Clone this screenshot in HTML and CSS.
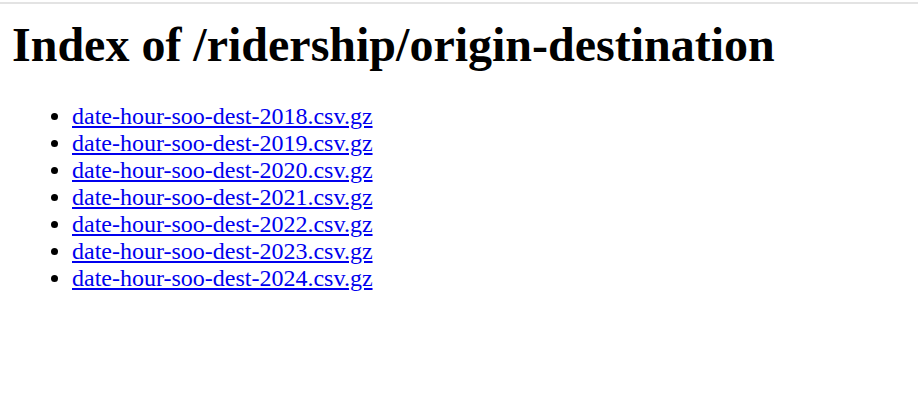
FILE: index.html
```html
<!DOCTYPE html>
<html>
<head>
<meta charset="utf-8">
<title>Index of /ridership/origin-destination</title>
<link rel="stylesheet" href="styles.css">
</head>
<body>
<div class="topline"></div>
<main class="page">
<h1 class="title">Index of /ridership/origin-destination</h1>
<ul class="files">
<li><a href="#">date-hour-soo-dest-2018.csv.gz</a></li>
<li><a href="#">date-hour-soo-dest-2019.csv.gz</a></li>
<li><a href="#">date-hour-soo-dest-2020.csv.gz</a></li>
<li><a href="#">date-hour-soo-dest-2021.csv.gz</a></li>
<li><a href="#">date-hour-soo-dest-2022.csv.gz</a></li>
<li><a href="#">date-hour-soo-dest-2023.csv.gz</a></li>
<li><a href="#">date-hour-soo-dest-2024.csv.gz</a></li>
</ul>
</main>
</body>
</html>
```
FILE: styles.css
```css
html, body {
  margin: 0;
  padding: 0;
  background: #fff;
}
body {
  font-family: "Liberation Serif", "Times New Roman", serif;
  font-size: 24px;
  color: #000;
}
.topline {
  height: 2px;
  margin-top: 2px;
  background: #e3e3e3;
}
.page {
  padding: 13px 12px 0 12px;
}
.title {
  font-size: 48px;
  font-weight: bold;
  margin: 0 0 31px 0;
}
.files {
  margin: 0;
  padding-left: 60px;
}
.files a {
  color: #0000ee;
}
```
